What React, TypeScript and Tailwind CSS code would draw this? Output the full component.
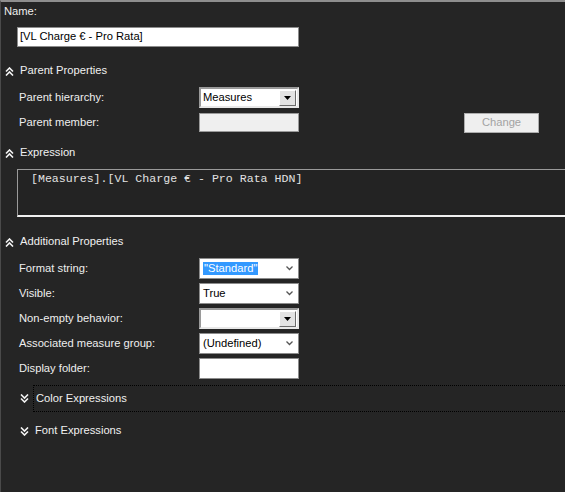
import type { ReactNode } from "react";

const additionalRows = [
  { label: "Format string:", kind: "flat", value: "\"Standard\"", selected: true },
  { label: "Visible:", kind: "flat", value: "True" },
  { label: "Non-empty behavior:", kind: "classic", value: "" },
  { label: "Associated measure group:", kind: "flat", value: "(Undefined)" },
  { label: "Display folder:", kind: "text", value: "" },
];

function ChevronsUp() {
  return (
    <svg width="9" height="9" viewBox="0 0 9 9" className="shrink-0">
      <polyline points="1,4.5 4.5,1 8,4.5" fill="none" stroke="#f4f4f4" strokeWidth="1.6" />
      <polyline points="1,8.5 4.5,5 8,8.5" fill="none" stroke="#f4f4f4" strokeWidth="1.6" />
    </svg>
  );
}

function ChevronsDown() {
  return (
    <svg width="9" height="9" viewBox="0 0 9 9" className="shrink-0">
      <polyline points="1,0.5 4.5,4 8,0.5" fill="none" stroke="#f4f4f4" strokeWidth="1.6" />
      <polyline points="1,4.5 4.5,8 8,4.5" fill="none" stroke="#f4f4f4" strokeWidth="1.6" />
    </svg>
  );
}

function SectionHeader({ children }: { children: ReactNode }) {
  return (
    <div className="flex h-4 items-center gap-[6px] pl-1 text-[#f0f0f0]">
      <ChevronsUp />
      <span>{children}</span>
    </div>
  );
}

function DropButton() {
  return (
    <div className="flex h-[16px] w-[17px] items-center justify-center border border-t-white border-l-white border-b-[#6b6b6b] border-r-[#6b6b6b] bg-[#e3e3e3]">
      <svg width="7" height="4" viewBox="0 0 7 4">
        <polygon points="0,0 7,0 3.5,4" fill="#000" />
      </svg>
    </div>
  );
}

function ClassicCombo({ value }: { value: string }) {
  return (
    <div className="flex h-[21px] w-[100px] items-center justify-between border-2 border-t-[#9a9a9a] border-l-[#9a9a9a] border-b-[#e8e8e8] border-r-[#e8e8e8] bg-white pr-[1px] pl-[2px] text-black">
      <span>{value}</span>
      <DropButton />
    </div>
  );
}

function FlatCombo({ value, selected }: { value: string; selected?: boolean }) {
  return (
    <div className="flex h-[21px] w-[100px] items-center justify-between border border-[#8c8c8c] bg-white pr-[5px] pl-[3px] text-black">
      <span className={selected ? "bg-[#3399ff] px-[1px] py-[1px] text-white" : ""}>{value}</span>
      <svg width="7" height="5" viewBox="0 0 7 5">
        <polyline points="0.5,0.5 3.5,3.5 6.5,0.5" fill="none" stroke="#555" strokeWidth="1.3" />
      </svg>
    </div>
  );
}

export default function App() {
  return (
    <div
      className="h-[492px] w-[565px] overflow-hidden border-t-2 border-l border-t-[#8e8e8e] border-l-[#4a4a4a] bg-[#252525] text-[11.2px] leading-none text-[#eeeeee]"
      style={{ fontFamily: '"Liberation Sans", Arial, sans-serif' }}
    >
      <div className="mt-[2px] flex h-4 items-center pl-[3px]">Name:</div>

      <div className="mt-[7px] ml-4 flex h-[20px] w-[282px] items-center border border-[#8c8c8c] bg-white pl-[2px] text-black">
        [VL Charge € - Pro Rata]
      </div>

      <div className="mt-4">
        <SectionHeader>Parent Properties</SectionHeader>
      </div>

      <div className="mt-2 flex h-[21px] items-center pl-[18px]">
        <span className="w-[180px]">Parent hierarchy:</span>
        <ClassicCombo value="Measures" />
      </div>

      <div className="mt-[5px] flex h-[20px] items-center pl-[18px]">
        <span className="w-[180px]">Parent member:</span>
        <div className="h-[19px] w-[100px] self-start border border-[#9a9a9a] bg-[#efefef]" />
        <button className="ml-[165px] h-[20px] w-[75px] border border-[#adadad] bg-[#efefef] text-[#a3a3a3]">
          Change
        </button>
      </div>

      <div className="mt-[12px]">
        <SectionHeader>Expression</SectionHeader>
      </div>

      <div className="mt-2 ml-4 h-[48px] border-t border-l border-b-2 border-t-[#9a9a9a] border-l-[#9a9a9a] border-b-[#f0f0f0] bg-[#232323] pt-[3px] pl-[13px]">
        <span
          className="text-[11.6px] text-[#e2e2e2]"
          style={{ fontFamily: '"Liberation Mono", "DejaVu Sans Mono", monospace' }}
        >
          [Measures].[VL Charge € - Pro Rata HDN]
        </span>
      </div>

      <div className="mt-[17px]">
        <SectionHeader>Additional Properties</SectionHeader>
      </div>

      <div className="mt-2 flex flex-col gap-1">
        {additionalRows.map((row) => (
          <div key={row.label} className="flex h-[21px] items-center pl-[18px]">
            <span className="w-[180px]">{row.label}</span>
            {row.kind === "classic" && <ClassicCombo value={row.value} />}
            {row.kind === "flat" && <FlatCombo value={row.value} selected={row.selected} />}
            {row.kind === "text" && (
              <div className="h-[21px] w-[100px] border border-[#8c8c8c] bg-white" />
            )}
          </div>
        ))}
      </div>

      <div className="mt-[6px] flex h-[27px] items-center">
        <div className="flex w-[32px] justify-end pr-[4px]">
          <ChevronsDown />
        </div>
        <div className="flex h-full flex-1 items-center border border-r-0 border-dotted border-black pl-[2px] text-[#f0f0f0]">
          Color Expressions
        </div>
      </div>

      <div className="mt-[11px] flex h-4 items-center">
        <div className="flex w-[32px] justify-end pr-[4px]">
          <ChevronsDown />
        </div>
        <span className="pl-[2px] text-[#f0f0f0]">Font Expressions</span>
      </div>
    </div>
  );
}
